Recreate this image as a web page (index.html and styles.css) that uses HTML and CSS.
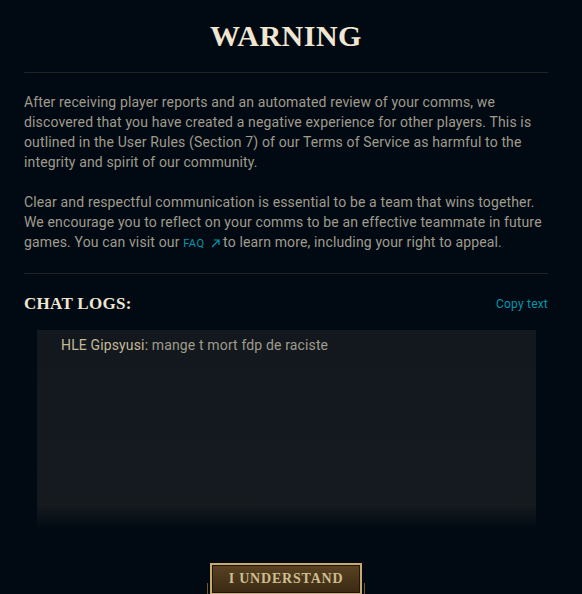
FILE: index.html
```html
<!DOCTYPE html>
<html lang="en">
<head>
<meta charset="utf-8">
<title>Warning</title>
<link rel="stylesheet" href="styles.css">
</head>
<body>
<main class="modal">
  <header class="modal-header">
    <h1 class="title">WARNING</h1>
  </header>
  <section class="body">
    <p class="para">After receiving player reports and an automated review of your comms, we discovered that you have created a negative experience for other players. This is outlined in the User Rules (Section 7) of our Terms of Service as harmful to the integrity and spirit of our community.</p>
    <p class="para">Clear and respectful communication is essential to be a team that wins together. We encourage you to reflect on your comms to be an effective teammate in future games. You can visit our <a class="faq" href="#">FAQ<svg class="ext" width="9" height="9" viewBox="0 0 9 9"><path d="M1 8 L8 1 M3 1 H8 V6" fill="none" stroke="currentColor" stroke-width="1.2"/></svg></a> to learn more, including your right to appeal.</p>
  </section>
  <section class="logs">
    <div class="logs-head">
      <h2 class="logs-title">CHAT LOGS:</h2>
      <a class="copy" href="#">Copy text</a>
    </div>
    <div class="log-box">
      <div class="log-line"><span class="who">HLE Gipsyusi:</span> mange t mort fdp de raciste</div>
    </div>
  </section>
  <footer class="actions">
    <button class="btn" type="button">I UNDERSTAND</button>
  </footer>
</main>
</body>
</html>
```

FILE: styles.css
```css
html, body {
  margin: 0;
  padding: 0;
  background: #010a13;
  height: 100%;
  overflow: hidden;
}
.modal {
  padding: 0 34px 0 24px;
  font-family: Roboto, "Liberation Sans", sans-serif;
  color: #a09b8c;
  font-size: 14px;
  letter-spacing: 0.14px;
  line-height: 20px;
}
.modal-header {
  padding: 16px 0 16px;
  border-bottom: 1px solid #1e2328;
  text-align: center;
}
.title {
  margin: 0;
  font-family: "Liberation Serif", serif;
  font-weight: 700;
  font-size: 30px;
  line-height: 40px;
  color: #f0e6d2;
  letter-spacing: 0.5px;
}
.body {
  padding: 19px 0 21px;
  border-bottom: 1px solid #1e2328;
}
.para {
  margin: 0;
}
.para + .para {
  margin-top: 20px;
}
.faq {
  color: #0397ab;
  text-decoration: none;
  font-size: 11px;
  line-height: 1;
  letter-spacing: 0.5px;
}
.ext {
  vertical-align: -1px;
  margin-left: 6px;
}
.logs {
  padding-top: 18px;
}
.logs-head {
  display: flex;
  justify-content: space-between;
  align-items: center;
  height: 24px;
}
.logs-title {
  margin: 0;
  font-family: "Liberation Serif", serif;
  font-weight: 700;
  font-size: 17px;
  line-height: 24px;
  color: #f0e6d2;
  letter-spacing: 0.3px;
}
.copy {
  color: #0397ab;
  text-decoration: none;
  font-size: 12px;
  letter-spacing: 0.2px;
  line-height: 24px;
}
.log-box {
  margin: 14px 12px 0 13px;
  height: 199px;
  box-sizing: border-box;
  padding: 5px 24px;
  background: linear-gradient(to bottom, #12181e 0, #141a1e 176px, #010a13 199px);
}
.log-line {
  line-height: 20px;
  color: #a09b8c;
}
.who {
  color: #c4b998;
}
.actions {
  display: flex;
  justify-content: center;
  padding-top: 34px;
}
.btn {
  position: relative;
  width: 152px;
  height: 32px;
  box-sizing: border-box;
  border: 2px solid #c8aa6e;
  box-shadow: inset 0 0 0 1px #1e1408;
  background: linear-gradient(to bottom, #5a4222, #3a2913);
  color: #cdbe91;
  font-family: "Liberation Serif", serif;
  font-weight: 700;
  font-size: 14px;
  letter-spacing: 0.8px;
  padding: 0;
  cursor: pointer;
}
.btn::before,
.btn::after {
  content: "";
  position: absolute;
  top: 18px;
  width: 1px;
  height: 20px;
  background: #785a28;
}
.btn::before { left: -5px; }
.btn::after { right: -5px; }
```
